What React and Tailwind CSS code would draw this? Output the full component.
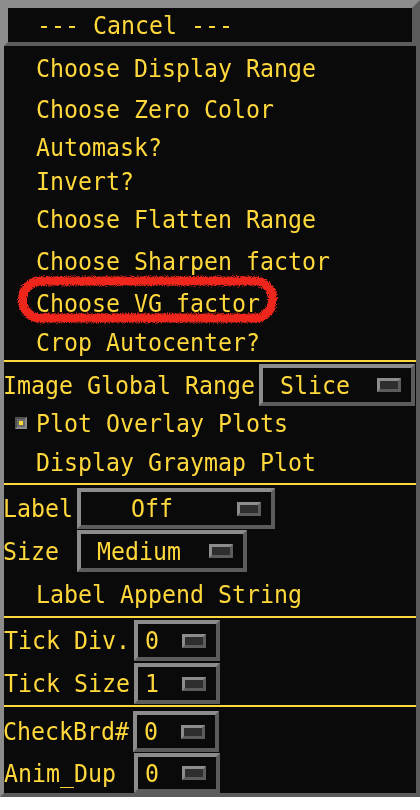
import React from 'react';

const T = ({ children, className = '' }) => (
  <span className={`inline-block leading-none scale-y-[1.1] whitespace-pre ${className}`}>{children}</span>
);

function Indicator() {
  return (
    <div className="w-[24px] h-[14px] border-[3px] border-t-[#8c8c8c] border-l-[#8c8c8c] border-b-[#5c5c5c] border-r-[#5c5c5c] bg-[#2e2e2e]" />
  );
}

function OptBox({ box, pad, text }) {
  return (
    <div className={`flex items-center border-4 border-t-[#8c8c8c] border-l-[#8c8c8c] border-b-[#5c5c5c] border-r-[#5c5c5c] bg-[#0a0a0a] ${box}`}>
      <div className={pad}><T>{text}</T></div>
      <div className="ml-auto mr-[10px]"><Indicator /></div>
    </div>
  );
}

function Item({ h, text, pl = 'pl-[32px]' }) {
  return (
    <div className={`flex items-center ${h} ${pl}`}>
      <T>{text}</T>
    </div>
  );
}

const Line = () => <div className="h-[2px] bg-[#ffd83c]" />;

export default function App() {
  return (
    <div className="w-[420px] h-[797px] flex flex-col border-4 border-t-[#8c8c8c] border-l-[#8c8c8c] border-r-[#5c5c5c] border-b-[#5c5c5c] bg-[#0a0a0a] text-[#ffd83c] text-[23.25px] font-['DejaVu_Sans_Mono',monospace]">
      {/* Cancel button */}
      <div className="h-[42px] flex items-center pl-[29px] border-4 border-t-[#8c8c8c] border-l-[#8c8c8c] border-r-[#5c5c5c] border-b-[#5c5c5c] bg-[#0a0a0a]">
        <T>--- Cancel ---</T>
      </div>
      {/* Body */}
      <div className="relative flex-1 flex flex-col">
        <Item h="h-[43px]" text="Choose Display Range" />
        <Item h="h-[39px]" text="Choose Zero Color" />
        <Item h="h-[37px]" text="Automask?" />
        <Item h="h-[31px]" text="Invert?" />
        <Item h="h-[45px]" text="Choose Flatten Range" />
        <Item h="h-[39px]" text="Choose Sharpen factor" />
        <Item h="h-[46px]" text="Choose VG factor" />
        <Item h="h-[31px]" text="Crop Autocenter?" />
        <div className="h-[3px]" />
        <Line />
        <div className="h-[44px] pt-[2px] flex items-center">
          <div className="w-[256px] -ml-px"><T>Image Global Range</T></div>
          <OptBox box="w-[156px] h-[42px]" pad="pl-[17px]" text="Slice" />
        </div>
        <div className="h-[34px] flex items-center">
          <div className="w-[32px] flex justify-center pl-[2px]">
            <div className="w-[12px] h-[12px] flex items-center justify-center border-2 border-t-[#505050] border-l-[#505050] border-b-[#8c8c8c] border-r-[#8c8c8c] bg-[#6a6a6a]">
              <div className="w-[4px] h-[4px] bg-[#ffd83c]" />
            </div>
          </div>
          <T>Plot Overlay Plots</T>
        </div>
        <Item h="h-[43px]" text="Display Graymap Plot" />
        <Line />
        <div className="h-[44px] pt-[3px] flex items-center">
          <div className="w-[74px] -ml-px"><T>Label</T></div>
          <OptBox box="w-[198px] h-[41px]" pad="pl-[50px]" text="Off" />
        </div>
        <div className="h-[43px] pt-[1px] flex items-center">
          <div className="w-[74px] -ml-px"><T>Size</T></div>
          <OptBox box="w-[170px] h-[42px]" pad="pl-[16px]" text="Medium" />
        </div>
        <Item h="h-[44px]" text="Label Append String" />
        <Line />
        <div className="h-[43px] pt-[2px] flex items-center">
          <div className="w-[130px]"><T>Tick Div.</T></div>
          <OptBox box="w-[86px] h-[41px]" pad="pl-[7px]" text="0" />
        </div>
        <div className="h-[43px] pt-[2px] flex items-center">
          <div className="w-[130px]"><T>Tick Size</T></div>
          <OptBox box="w-[86px] h-[41px]" pad="pl-[7px]" text="1" />
        </div>
        <div className="h-[1px]" />
        <Line />
        <div className="h-[45px] pt-[4px] flex items-center">
          <div className="w-[130px] -ml-px"><T>CheckBrd#</T></div>
          <OptBox box="w-[86px] h-[41px]" pad="pl-[7px]" text="0" />
        </div>
        <div className="h-[41px] pt-[1px] flex items-center">
          <div className="w-[130px]"><T>Anim_Dup</T></div>
          <OptBox box="w-[86px] h-[40px]" pad="pl-[7px]" text="0" />
        </div>

        {/* red annotation ring */}
        <svg className="absolute left-[10px] top-[226px] pointer-events-none" width="272" height="56" viewBox="0 0 272 56">
          <defs>
            <filter id="rough" x="-10%" y="-30%" width="120%" height="160%">
              <feTurbulence type="fractalNoise" baseFrequency="0.9" numOctaves="2" seed="5" result="n" />
              <feDisplacementMap in="SourceGraphic" in2="n" scale="5" xChannelSelector="R" yChannelSelector="G" />
            </filter>
          </defs>
          <rect x="8.5" y="9" width="250" height="37" rx="18" fill="none" stroke="#f0281e" strokeWidth="9" filter="url(#rough)" />
        </svg>
      </div>
    </div>
  );
}
